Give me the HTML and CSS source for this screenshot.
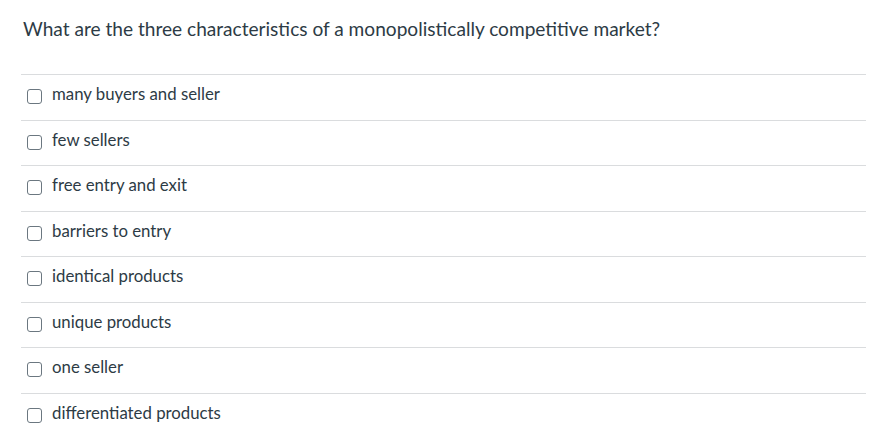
FILE: index.html
```html
<!DOCTYPE html>
<html lang="en">
<head>
    <meta charset="UTF-8">
    <title>Quiz Question</title>
    <link rel="stylesheet" href="styles.css">
</head>
<body>
    <div class="question">
        <div class="question-text">What are the three characteristics of a monopolistically competitive market?</div>
        <div class="answers">
            <label class="answer"><span class="box"></span><span>many buyers and seller</span></label>
            <label class="answer"><span class="box"></span><span>few sellers</span></label>
            <label class="answer"><span class="box"></span><span>free entry and exit</span></label>
            <label class="answer"><span class="box"></span><span>barriers to entry</span></label>
            <label class="answer"><span class="box"></span><span>identical products</span></label>
            <label class="answer"><span class="box"></span><span>unique products</span></label>
            <label class="answer"><span class="box"></span><span>one seller</span></label>
            <label class="answer"><span class="box"></span><span>differentiated products</span></label>
        </div>
    </div>
</body>
</html>
```

FILE: styles.css
```css
body {
    margin: 0;
    font-family: Lato, "Open Sans", sans-serif;
    color: #2d3b45;
    background: white;
}
.question {
    width: 845px;
    padding: 0 0 0 21px;
}
.question-text {
    font-size: 19.1px;
    padding: 17px 0 0 2px;
    height: 74px;
    box-sizing: border-box;
}
.answer {
    display: flex;
    align-items: flex-start;
    gap: 10px;
    height: 45.57px;
    box-sizing: border-box;
    border-top: 1px solid #dadcde;
    padding: 8px 0 0 6px;
    font-size: 16.8px;
}
.box {
    width: 15px;
    height: 15px;
    margin-top: 6px;
    box-sizing: border-box;
    border: 1px solid #6b7780;
    border-radius: 3px;
}
```
